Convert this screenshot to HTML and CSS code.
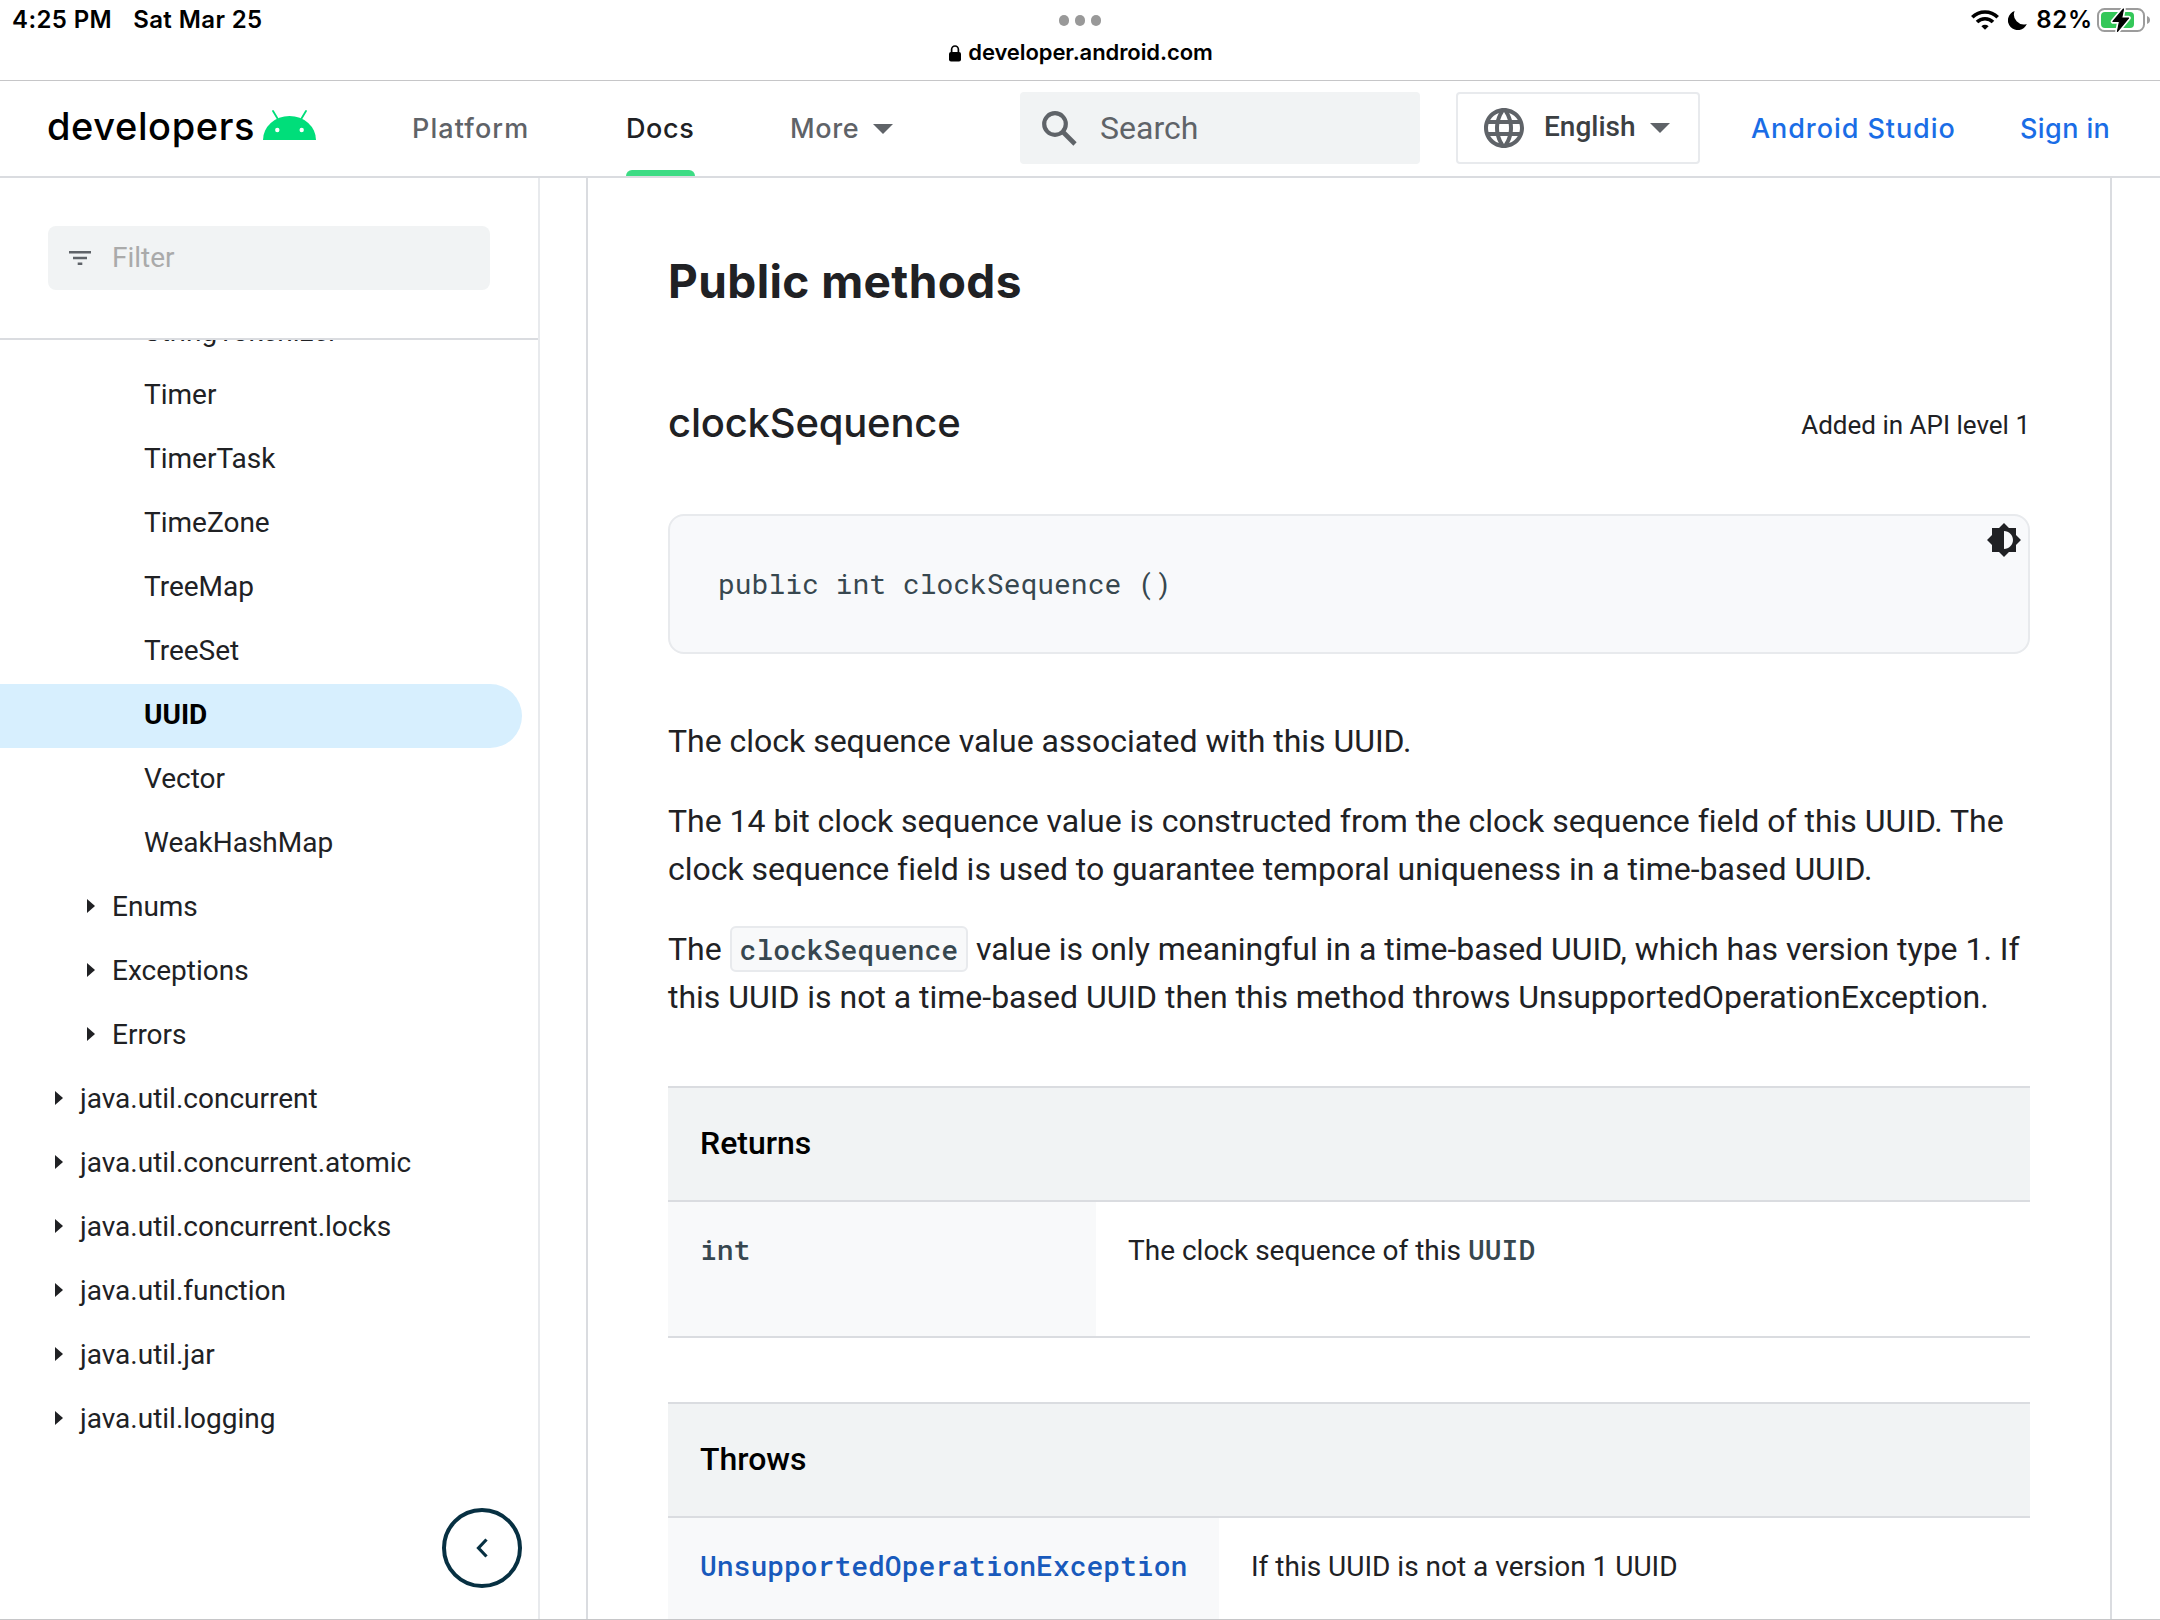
FILE: index.html
```html
<!DOCTYPE html>
<html lang="en">
<head>
<meta charset="utf-8">
<title>UUID | Android Developers</title>
<link rel="stylesheet" href="styles.css">
</head>
<body>
<div class="screen">
  <div class="status">
    <div class="status-left"><span class="time">4:25 PM</span><span class="date">Sat Mar 25</span></div>
    <div class="status-mid">
      <div class="dots"><i class="dot"></i><i class="dot"></i><i class="dot"></i></div>
      <div class="address">
        <svg class="lock" viewBox="0 0 12 17"><rect x="0" y="7" width="12" height="9.5" rx="2"/><path d="M2.6 8V4.6a3.4 3.6 0 0 1 6.8 0V8" fill="none" stroke="#000" stroke-width="1.7"/></svg>
        <span class="host">developer.android.com</span>
      </div>
    </div>
    <div class="status-right">
      <svg class="wifi" viewBox="0 0 28 20"><g fill="none" stroke="#000" stroke-width="3.6"><path d="M1.3 7.3a18 18 0 0 1 25.4 0"/><path d="M6 12a11.3 11.3 0 0 1 16 0"/></g><path d="M10.400 16.200a5.200 5.200 0 0 1 7.200 0L14 19.800z"/></svg>
      <svg class="moon" viewBox="0 0 19 19"><path d="M6.600 0A9.900 9.900 0 0 0 18.800 13 9.800 9.800 0 1 1 6.600 0z"/></svg>
      <span class="percent">82%</span>
      <svg class="battery" viewBox="0 0 54 26"><rect x="1" y="2" width="46" height="22" rx="6.5" fill="#fff" stroke="#9c9c9c" stroke-width="2"/><path d="M50 9q3 1.2 3 4t-3 4z" fill="#9c9c9c"/><rect x="4" y="5" width="33" height="16" rx="4" fill="#34c759"/><path d="M26.500 2 16 14.500h6.500L20.500 24.300 31.500 11h-6.800z" stroke="#fff" stroke-width="4.500" stroke-linejoin="round"/><path d="M26.500 2 16 14.500h6.500L20.500 24.300 31.500 11h-6.800z" stroke="#000" stroke-width="1.200" stroke-linejoin="round"/></svg>
    </div>
  </div>

  <header class="topbar">
    <a class="logo"><span class="logo-text">developers</span>
      <svg class="droid" viewBox="0 0 53 30"><path d="M0 30a26.500 24 0 0 1 53 0z" fill="#00de7a"/><path d="m14.500 8.500-4.500-7.500M38.500 8.500l4.500-7.500" stroke="#00de7a" stroke-width="1.800" stroke-linecap="round"/><circle cx="14.300" cy="20" r="2.200" fill="#fff"/><circle cx="38.700" cy="20" r="2.200" fill="#fff"/></svg>
    </a>
    <nav class="tabs">
      <a class="tab tab-platform">Platform</a>
      <a class="tab tab-docs">Docs</a>
      <a class="tab tab-more">More <svg class="arrow" viewBox="0 0 20 10"><path d="M0 0h20L10 10z"/></svg></a>
    </nav>
    <div class="search">
      <svg class="glass" viewBox="0 0 35 35"><circle cx="13" cy="13" r="10.800" fill="none" stroke="#5f6368" stroke-width="4.200"/><path d="M21.500 21.500 33 33" stroke="#5f6368" stroke-width="4.600"/></svg>
      <span>Search</span>
    </div>
    <div class="language">
      <svg class="globe" viewBox="2 2 20 20"><path d="M11.990 2C6.470 2 2 6.480 2 12s4.470 10 9.990 10C17.520 22 22 17.520 22 12S17.520 2 11.990 2zm6.930 6h-2.950c-.32-1.250-.78-2.450-1.380-3.560 1.840.63 3.370 1.910 4.330 3.560zM12 4.040c.83 1.200 1.480 2.530 1.910 3.960h-3.820c.43-1.430 1.080-2.760 1.910-3.960zM4.260 14C4.100 13.360 4 12.690 4 12s.1-1.360.26-2h3.380c-.08.66-.14 1.320-.14 2s.06 1.340.14 2H4.260zm.82 2h2.950c.32 1.250.78 2.450 1.380 3.560-1.840-.63-3.370-1.900-4.330-3.560zm2.950-8H5.080c.96-1.660 2.490-2.930 4.330-3.560C8.810 5.550 8.350 6.750 8.030 8zM12 19.960c-.83-1.200-1.480-2.530-1.910-3.960h3.820c-.43 1.430-1.080 2.760-1.910 3.960zM14.340 14H9.660c-.09-.66-.16-1.320-.16-2s.07-1.350.16-2h4.680c.09.65.16 1.320.16 2s-.07 1.340-.16 2zm.25 5.560c.6-1.110 1.060-2.310 1.380-3.560h2.950c-.96 1.650-2.490 2.930-4.330 3.560zM16.360 14c.08-.66.14-1.320.14-2s-.06-1.340-.14-2h3.380c.16.64.26 1.310.26 2s-.1 1.360-.26 2h-3.380z"/></svg>
      <span class="lang-name">English</span>
      <svg class="arrow" viewBox="0 0 20 10"><path d="M0 0h20L10 10z"/></svg>
    </div>
    <a class="link link-studio">Android Studio</a>
    <a class="link link-signin">Sign in</a>
  </header>

  <div class="body">
    <aside class="sidebar">
      <div class="filter-wrap">
        <div class="filter"><svg class="filter-icon" viewBox="0 0 22 14"><path d="M0 0h22v2.400H0zM4 5.800h14v2.400H4zM8.700 11.600h4.600V14H8.700z"/></svg><span>Filter</span></div>
      </div>
      <div class="tree">
        <div class="item deep">StringTokenizer</div>
        <div class="item deep">Timer</div>
        <div class="item deep">TimerTask</div>
        <div class="item deep">TimeZone</div>
        <div class="item deep">TreeMap</div>
        <div class="item deep">TreeSet</div>
        <div class="item deep active">UUID</div>
        <div class="item deep">Vector</div>
        <div class="item deep">WeakHashMap</div>
        <div class="item mid"><i class="caret"></i>Enums</div>
        <div class="item mid"><i class="caret"></i>Exceptions</div>
        <div class="item mid"><i class="caret"></i>Errors</div>
        <div class="item"><i class="caret"></i>java.util.concurrent</div>
        <div class="item"><i class="caret"></i>java.util.concurrent.atomic</div>
        <div class="item"><i class="caret"></i>java.util.concurrent.locks</div>
        <div class="item"><i class="caret"></i>java.util.function</div>
        <div class="item"><i class="caret"></i>java.util.jar</div>
        <div class="item"><i class="caret"></i>java.util.logging</div>
      </div>
      <div class="collapse"><svg class="chevron" viewBox="0 0 12 20"><path d="M10.500 1.500 2.500 10l8 8.500" fill="none" stroke="#073042" stroke-width="3.200"/></svg></div>
    </aside>

    <main class="article">
      <h2 class="section-title">Public methods</h2>
      <div class="method-head"><h3 class="method-name">clockSequence</h3><span class="api-level">Added in API level 1</span></div>
      <div class="code-box"><code class="signature">public int clockSequence ()</code>
        <svg class="theme" viewBox="0 0 24 24"><path d="M20 8.690V4h-4.690L12 .69 8.690 4H4v4.690L.69 12 4 15.310V20h4.690L12 23.310 15.310 20H20v-4.690L23.310 12 20 8.690zM12 18V6c3.310 0 6 2.690 6 6s-2.690 6-6 6z"/></svg>
      </div>
      <p class="para">The clock sequence value associated with this UUID.</p>
      <p class="para">The 14 bit clock sequence value is constructed from the clock sequence field of this UUID. The<br>clock sequence field is used to guarantee temporal uniqueness in a time-based UUID.</p>
      <p class="para">The <code class="chip">clockSequence</code> value is only meaningful in a time-based UUID, which has version type 1. If<br>this UUID is not a time-based UUID then this method throws UnsupportedOperationException.</p>
      <section class="table returns">
        <div class="table-head">Returns</div>
        <div class="table-row"><div class="cell-key"><code>int</code></div><div class="cell-value">The clock sequence of this <code>UUID</code></div></div>
      </section>
      <section class="table throws">
        <div class="table-head">Throws</div>
        <div class="table-row"><div class="cell-key"><code class="code-link">UnsupportedOperationException</code></div><div class="cell-value">If this UUID is not a version 1 UUID</div></div>
      </section>
    </main>
  </div>
</div>
</body>
</html>
```
FILE: styles.css
```css
* { box-sizing: border-box; }
body { margin: 0; background: #fff; color: #202124; font-family: Roboto, "Liberation Sans", sans-serif; }
svg { display: block; flex: none; }
h2, h3, p { margin: 0; }
code { font-family: "Roboto Mono", "DejaVu Sans Mono", monospace; font-size: 28px; color: #37474f; }

.screen { width: 2160px; height: 1620px; overflow: hidden; display: flex; flex-direction: column; position: relative; }
.screen::after { content: ""; position: absolute; left: 0; right: 0; bottom: 0; height: 1px; background: #c6c6c8; }

/* Device status bar */
.status { height: 81px; flex: none; border-bottom: 1px solid #c6c6c8; display: grid; grid-template-columns: 1fr auto 1fr; color: #000; font-family: Inter, sans-serif; font-weight: 600; font-size: 24px; line-height: 40px; white-space: nowrap; letter-spacing: 0.400px; }
.status-left { display: flex; gap: 21px; padding-left: 12px; }
.status-mid { display: flex; flex-direction: column; align-items: center; padding-top: 15px; }
.dots { display: flex; gap: 5.500px; height: 10.500px; }
.dot { width: 10.500px; height: 10.500px; border-radius: 50%; background: #999; }
.address { display: flex; gap: 7px; align-items: flex-start; margin-top: 12px; padding-left: 2px; }
.lock { width: 12px; height: 17px; margin-top: 7px; }
.host { font-size: 22px; line-height: 28px; letter-spacing: -0.080px; }
.status-right { display: flex; justify-content: flex-end; padding-right: 9px; height: 40px; align-items: center; }
.percent { letter-spacing: 0.800px; }
.wifi { width: 28px; height: 20px; }
.moon { width: 19px; height: 19px; margin: 0 9px 0 9px; }
.battery { width: 54px; height: 26px; margin-left: 4px; }

/* Site header */
.topbar { height: 97px; flex: none; border-bottom: 2px solid #dadce0; display: flex; align-items: flex-start; font-family: Inter, sans-serif; font-weight: 500; font-size: 27px; color: #5f6368; white-space: nowrap; letter-spacing: 0.600px; }
.logo { display: flex; padding-left: 47px; width: 412px; color: #000; }
.logo-text { width: 216px; font-size: 38px; line-height: 46px; margin-top: 22px; letter-spacing: 0.600px; }
.droid { width: 53px; height: 30px; margin-top: 29px; }
.tabs { display: flex; width: 608px; }
.tab { height: 95px; line-height: 96px; }
.tab-platform { width: 214px; letter-spacing: 1.100px; }
.tab-docs { width: 69px; color: #202124; position: relative; }
.tab-docs::after { content: ""; position: absolute; left: 0; right: 0; bottom: 0; height: 6px; background: #3ddc84; border-radius: 6px 6px 0 0; }
.tab-more { margin-left: 95px; display: flex; align-items: center; gap: 14px; }
.arrow { width: 20px; height: 10px; fill: #5f6368; }
.search { width: 400px; height: 72px; margin-top: 11px; border-radius: 4px; background: #f1f3f4; display: flex; align-items: center; gap: 23px; padding-left: 22px; font: 400 32px/72px Roboto, sans-serif; letter-spacing: 0; }
.glass { width: 35px; height: 35px; }
.language { width: 244px; height: 72px; margin: 11px 0 0 36px; border: 2px solid #e8eaed; border-radius: 4px; display: flex; align-items: center; padding-left: 26px; font: 500 28px/64px Roboto, sans-serif; letter-spacing: 0; color: #3c4043; }
.globe { width: 40px; height: 40px; margin-right: 20px; fill: #5f6368; }
.lang-name { width: 106px; margin-top: -3px; }
.link { color: #1a6de6; line-height: 96px; }
.link-studio { margin-left: 51px; width: 269px; letter-spacing: 0.930px; }
.link-signin { letter-spacing: 0.400px; }

/* Reference tree */
.body { flex: 1; display: flex; min-height: 0; }
.sidebar { width: 540px; flex: none; border-right: 2px solid #e8eaed; display: flex; flex-direction: column; position: relative; }
.filter-wrap { height: 162px; flex: none; padding: 48px 48px 0; border-bottom: 2px solid #dadce0; }
.filter { height: 64px; width: 442px; border-radius: 8px; background: #f1f3f4; display: flex; align-items: center; gap: 21px; padding-left: 21px; font-size: 28px; line-height: 62px; color: #aaa; }
.filter-icon { width: 22px; height: 14px; fill: #5f6368; }
.tree { flex: 1; min-height: 0; overflow: hidden; display: flex; flex-direction: column; justify-content: flex-start; }
.item { height: 64px; flex: none; display: flex; align-items: center; font-size: 28px; line-height: 32px; padding: 0 0 2px 55px; }
.item:first-child { margin-top: -40px; padding-bottom: 0; }
.deep { padding-left: 144px; }
.mid { padding-left: 87px; }
.active { width: 522px; background: #d7effe; border-radius: 0 32px 32px 0; font-weight: 700; color: #000; }
.caret { border: solid transparent; border-width: 7px 0 7px 8px; border-left-color: #202124; margin: 0 17px 2px 0; }
.collapse { position: absolute; left: 442px; bottom: 32px; width: 80px; height: 80px; border: 4px solid #073042; border-radius: 50%; background: #fff; display: flex; align-items: center; justify-content: center; }
.chevron { width: 12px; height: 20px; }

/* Article */
.article { margin-left: 46px; width: 1526px; border: solid #dadce0; border-width: 0 2px; padding: 0 80px; white-space: nowrap; }
.section-title { font: 700 46px/64px Inter, sans-serif; letter-spacing: 0.400px; margin-top: 71px; }
.method-head { display: flex; justify-content: space-between; align-items: flex-start; margin: 86px 0 0; height: 48px; }
.method-name { font: 500 40px/48px Inter, sans-serif; letter-spacing: -0.200px; }
.api-level { font-size: 26px; line-height: 52px; }
.code-box { margin-top: 67px; height: 140px; border: 2px solid #e8eaed; border-radius: 16px; background: #f8f9fb; padding: 50px 48px; position: relative; }
.signature { display: block; line-height: 36px; }
.theme { position: absolute; right: 6px; top: 6px; width: 36px; height: 36px; fill: #202124; }
.para { font-size: 32px; line-height: 48px; margin-top: 32px; letter-spacing: -0.015px; }
.code-box + .para { margin-top: 63px; }
.chip { border: 2px solid #e8eaed; border-radius: 6px; background: #f8f9fa; padding: 3px 8px 2px; font-weight: 500; line-height: 28px; letter-spacing: 0; }
.table { border-top: 2px solid #dadce0; }
.returns { margin-top: 65px; }
.throws { margin-top: 64px; }
.table-head { height: 114px; background: #f1f3f4; border-bottom: 2px solid #dadce0; padding-left: 32px; font-weight: 500; font-size: 32px; line-height: 110px; color: #000; }
.table-row { display: flex; height: 136px; border-bottom: 2px solid #dadce0; font-size: 28px; line-height: 40px; }
.table-row code { font-weight: 500; line-height: 28px; }
.cell-key { background: #f8f9fa; width: 428px; padding: 29px 32px; }
.throws .cell-key { width: 551px; }
.cell-value { padding: 29px 32px; }
.table-row .code-link { color: #185abc; }
```
